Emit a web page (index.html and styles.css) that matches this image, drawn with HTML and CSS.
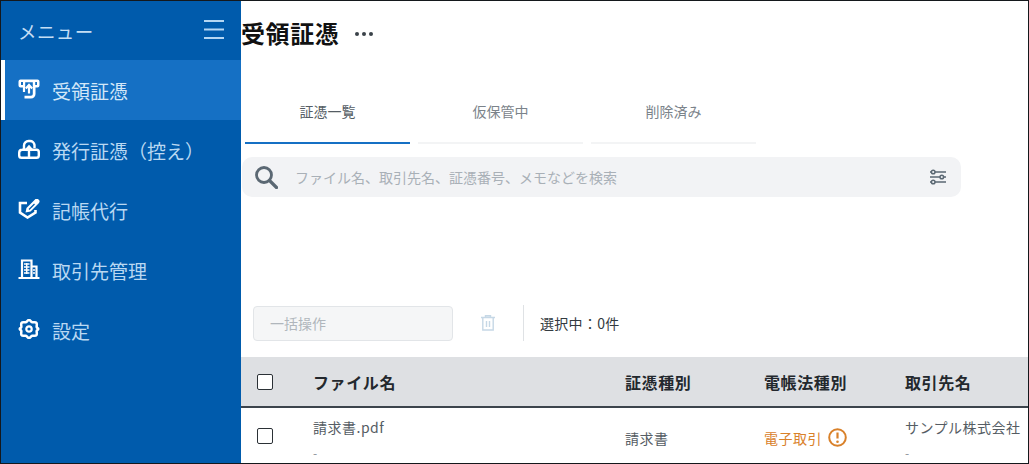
FILE: index.html
```html
<!DOCTYPE html>
<html lang="ja">
<head>
<meta charset="utf-8">
<title>受領証憑</title>
<link rel="stylesheet" href="styles.css">
</head>
<body>
<div class="app">
  <aside class="sidebar">
    <div class="side-head">
      <span class="side-title">メニュー</span>
      <svg class="burger" viewBox="0 0 20 19" width="20" height="19"><path d="M0 1h20M0 9.500h20M0 18h20" stroke="#b4d6f3" stroke-width="2" fill="none"/></svg>
    </div>
    <nav class="nav">
      <a class="nav-item active">
        <svg class="nav-icon" viewBox="0 0 22 20"><path fill-rule="evenodd" fill="#fff" d="M2.500 0.500h17a2 2 0 0 1 2 2v4a2 2 0 0 1-2 2h-2V15a4.500 4.500 0 0 1-4.500 4.500H6.500v-2.800H13a1.800 1.800 0 0 0 1.800-1.800V3.200H7.200v5.300H2.500a2 2 0 0 1-2-2v-4a2 2 0 0 1 2-2zM3 3v3h2V3zM17.200 3v3H19V3z"/><path d="M11 14.500V6.500M7.800 9.500L11 6l3.200 3.500" fill="none" stroke="#fff" stroke-width="2.200"/><path d="M6 8v5" stroke="#fff" stroke-width="2.200"/></svg>
        <span>受領証憑</span>
      </a>
      <a class="nav-item">
        <svg class="nav-icon" viewBox="0 0 22 20"><path d="M6 10.500V6.500a4.500 4.500 0 0 1 4.500-4.500h1.500a4.500 4.500 0 0 1 4.500 4v3" fill="none" stroke="#fff" stroke-width="2.400"/><path d="M4 10.800h14.500a2.300 2.300 0 0 1 2.300 2.300v3.400a2.300 2.300 0 0 1-2.300 2.300h-15a2.300 2.300 0 0 1-2.300-2.300v-2.800a3 3 0 0 1 3-2.900z" fill="none" stroke="#fff" stroke-width="2.400"/><path d="M11 18V8M7.500 11.500L11 7.500l3.500 4" fill="none" stroke="#fff" stroke-width="2.400"/></svg>
        <span>発行証憑（控え）</span>
      </a>
      <a class="nav-item">
        <svg class="nav-icon" viewBox="0 0 22 20"><path d="M9 4H2v9.500l7.500 5 8-5V11" fill="none" stroke="#fff" stroke-width="2.600"/><path d="M7.500 13.500l1-4.500 8-8a2.300 2.300 0 0 1 4.500 3l-8.500 8.500z" fill="#fff"/><path d="M11 10.500l5.500-5.500" stroke="#005bac" stroke-width="1.200"/></svg>
        <span>記帳代行</span>
      </a>
      <a class="nav-item">
        <svg class="nav-icon" viewBox="0 0 22 20"><path d="M4 18.500V1.500h9.500v17M13.500 7.500h5V18.500M0.500 19h21" fill="none" stroke="#fff" stroke-width="2.200"/><path d="M6 5h5.500M6 8h5.500M6 11h5.500M6 14h5.500M8.700 4v11M15 11h2M15 14h2" stroke="#fff" stroke-width="1.500"/></svg>
        <span>取引先管理</span>
      </a>
      <a class="nav-item">
        <svg class="nav-icon gear" viewBox="0 0 22 20"><path d="M11 0.800c1.100 0 1.800 2 3.300 2.400 1.700.4 3.300-.6 4.200.8.800 1.300-.1 2.900.2 4.200.3 1 1.600 1 1.600 1.800s-1.300.8-1.600 1.800c-.3 1.300.6 2.900-.2 4.200-.9 1.400-2.500.4-4.200.8-1.500.4-2.200 2.400-3.300 2.400s-1.800-2-3.300-2.400c-1.700-.4-3.300.6-4.200-.8-.8-1.300.1-2.900-.2-4.200-.3-1-1.600-1-1.600-1.800s1.300-.8 1.600-1.800c.3-1.300-.6-2.900.2-4.200.9-1.400 2.500-.4 4.200-.8 1.500-.4 2.200-2.400 3.300-2.400z" fill="none" stroke="#fff" stroke-width="2.500"/><circle cx="11" cy="10" r="2.700" fill="none" stroke="#fff" stroke-width="2.200"/></svg>
        <span>設定</span>
      </a>
    </nav>
  </aside>
  <main class="main">
    <header class="title-row">
      <h1 class="title">受領証憑</h1>
      <span class="more"><i></i><i></i><i></i></span>
    </header>
    <div class="tabs">
      <div class="tab current">証憑一覧</div>
      <div class="tab">仮保管中</div>
      <div class="tab">削除済み</div>
    </div>
    <div class="search">
      <svg class="search-icon" viewBox="0 0 24 24" width="24" height="24"><circle cx="10" cy="10" r="7.500" fill="none" stroke="#5b6873" stroke-width="2.800"/><path d="M15.500 15.500L22.500 22.500" stroke="#5b6873" stroke-width="3.200" stroke-linecap="round"/></svg>
      <span class="placeholder">ファイル名、取引先名、証憑番号、メモなどを検索</span>
      <svg class="filter-icon" viewBox="0 0 16 16" width="16" height="16"><path d="M5 3h11M0 3h1.500M0 8h10M13.500 8H16M5 13h11M0 13h1.500" stroke="#5b6873" stroke-width="1.500"/><circle cx="3.200" cy="3" r="1.800" fill="none" stroke="#5b6873" stroke-width="1.500"/><circle cx="11.800" cy="8" r="1.800" fill="none" stroke="#5b6873" stroke-width="1.500"/><circle cx="3.200" cy="13" r="1.800" fill="none" stroke="#5b6873" stroke-width="1.500"/></svg>
    </div>
    <div class="toolbar">
      <div class="bulk">一括操作</div>
      <svg class="trash" viewBox="0 0 14 16" width="14" height="16"><path d="M0 2.500h14M4.500 2.500V.8h5v1.700M1.800 2.500V15h10.400V2.500M5.500 6v6M8.500 6v6" fill="none" stroke="#c6d8e6" stroke-width="1.400"/></svg>
      <div class="divider"></div>
      <div class="selected">選択中：0件</div>
    </div>
    <div class="table-head">
      <div class="cell c-check"><span class="box"></span></div>
      <div class="cell c-file">ファイル名</div>
      <div class="cell c-type">証憑種別</div>
      <div class="cell c-law">電帳法種別</div>
      <div class="cell c-client">取引先名</div>
    </div>
    <div class="table-row">
      <div class="cell c-check"><span class="box"></span></div>
      <div class="cell c-file stack"><span>請求書.pdf</span><span class="dash">-</span></div>
      <div class="cell c-type row-mid">請求書</div>
      <div class="cell c-law law-val">電子取引
        <svg class="warn" viewBox="0 0 19 19" width="19" height="19"><circle cx="9.500" cy="9.500" r="8.300" fill="none" stroke="#d9812a" stroke-width="2"/><path d="M9.500 4.500v6" stroke="#d9812a" stroke-width="2.200"/><circle cx="9.500" cy="13.800" r="1.300" fill="#d9812a"/></svg>
      </div>
      <div class="cell c-client stack"><span>サンプル株式会社</span><span class="dash">-</span></div>
    </div>
  </main>
</div>
</body>
</html>
```
FILE: styles.css
```css
* { box-sizing: border-box; }
html, body { margin: 0; height: 100%; }
body {
  font-family: "Noto Sans CJK JP", "Noto Sans", sans-serif;
  background: #fff;
  overflow: hidden;
}
.app {
  width: 1029px;
  height: 464px;
  display: flex;
  border: 1px solid #14181c;
  overflow: hidden;
}
.sidebar {
  width: 240px;
  flex: none;
  background: #005bac;
  color: #b9d8f2;
}
.side-head {
  height: 59px;
  padding: 0 17px 0 17px;
  display: flex;
  align-items: center;
  justify-content: space-between;
}
.side-title { font-size: 18.500px; letter-spacing: 0.400px; color: #c4def4; }
.burger { margin-top: -3px; }
.nav-item {
  height: 60px;
  display: flex;
  align-items: center;
  gap: 12px;
  padding-left: 17px;
  font-size: 19px;
  color: #b9d8f2;
}
.nav-item.active {
  background: #1570c4;
  border-left: 4px solid #fff;
  padding-left: 13px;
  color: #d3e7f8;
}
.nav-icon { width: 22px; height: 20px; flex: none; margin-top: -2px; }
.main { flex: 1; min-width: 0; overflow: hidden; }
.title-row {
  height: 59px;
  display: flex;
  align-items: center;
  gap: 16px;
  padding-top: 5px;
}
.title {
  margin: 0;
  font-size: 24px;
  letter-spacing: 0.600px;
  font-weight: 700;
  color: #111;
  line-height: 1;
  white-space: nowrap;
}
.more { display: flex; gap: 3px; margin-top: 2px; }
.more i { width: 4px; height: 4px; border-radius: 50%; background: #3a4249; }
.tabs {
  display: flex;
  gap: 8px;
  margin: 0 0 0 4px;
  height: 84px;
}
.tab {
  width: 165px;
  border-bottom: 2px solid #f3f4f5;
  padding-top: 39px;
  text-align: center;
  font-size: 14px;
  line-height: 24px;
  color: #7b838a;
}
.tab.current { border-bottom-color: #1570c4; color: #555d64; }
.search {
  margin: 13px 0 0 1px;
  width: 719px;
  height: 40px;
  background: #f2f3f5;
  border-radius: 10px;
  display: flex;
  align-items: center;
  padding: 0 15px 0 12px;
}
.search-icon { flex: none; }
.placeholder { margin-left: 17px; font-size: 14px; color: #a9b0b7; flex: 1; }
.toolbar {
  margin-top: 108px;
  height: 36px;
  display: flex;
  align-items: center;
  padding-left: 12px;
}
.bulk {
  width: 200px;
  height: 35px;
  border: 1px solid #e2e5e8;
  border-radius: 4px;
  background: #f5f6f7;
  font-size: 14px;
  line-height: 33px;
  padding-left: 16px;
  color: #b0b6bc;
}
.trash { margin-left: 28px; }
.divider { width: 1px; height: 36px; background: #dfe2e5; margin-left: 28px; }
.selected { margin-left: 16px; font-size: 14px; letter-spacing: 0.300px; color: #333a40; }
.table-head, .table-row { display: flex; align-items: center; width: 788px; }
.table-head {
  margin-top: 16px;
  height: 51px;
  background: #dee0e3;
  border-bottom: 2px solid #3c444c;
  font-weight: 700;
  font-size: 16px;
  letter-spacing: 0.600px;
  color: #23282d;
}
.table-row { height: 56px; font-size: 14px; letter-spacing: 0.500px; color: #555d64; }
.cell { white-space: nowrap; }
.c-check { width: 72px; padding-left: 16px; display: flex; align-items: center; flex: none; }
.c-file { width: 312px; flex: none; }
.c-type { width: 139px; flex: none; }
.c-law { width: 141px; flex: none; }
.c-client { flex: none; }
.row-mid { margin-top: 4px; }
.box {
  width: 16px;
  height: 16px;
  border: 1px solid #2b3136;
  border-radius: 2px;
  background: #fff;
  display: block;
}
.stack { display: flex; flex-direction: column; gap: 9px; line-height: 20px; margin-top: 4px; }
.dash { color: #8a9198; line-height: 14px; font-size: 12px; }
.law-val { display: flex; align-items: center; gap: 6px; color: #d9812a; font-size: 14px; margin-top: 4px; }
.warn { margin-top: -2px; }
```
